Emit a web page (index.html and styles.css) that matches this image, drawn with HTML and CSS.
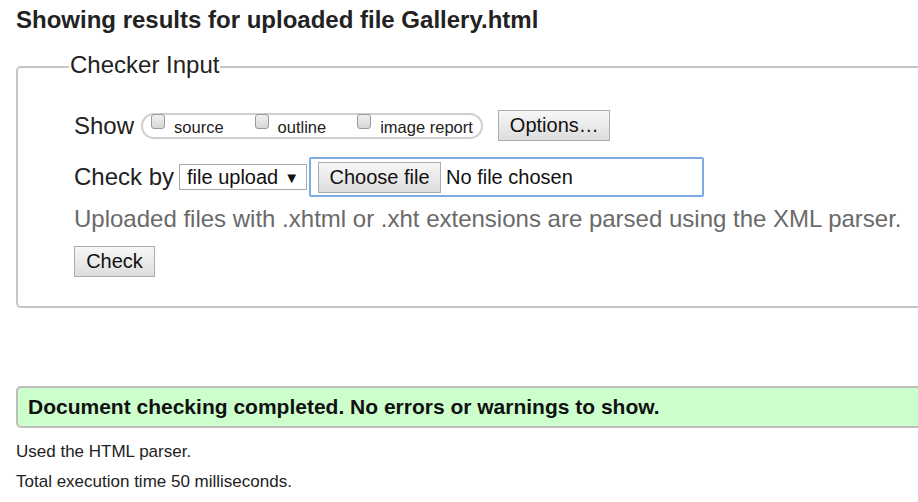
FILE: index.html
```html
<!DOCTYPE html>
<html lang="en">
<head>
<meta charset="utf-8">
<title>Showing results for uploaded file Gallery.html</title>
<link rel="stylesheet" href="styles.css">
</head>
<body>
<h1 class="title">Showing results for uploaded file Gallery.html</h1>
<form class="checker">
  <fieldset class="checker-fieldset">
    <legend class="checker-legend">Checker Input</legend>
    <div class="row row-show">
      <span class="row-label">Show</span>
      <span class="pill">
        <label class="opt"><input type="checkbox" class="cb"><span class="opt-text">source</span></label>
        <label class="opt"><input type="checkbox" class="cb"><span class="opt-text">outline</span></label>
        <label class="opt"><input type="checkbox" class="cb"><span class="opt-text">image report</span></label>
      </span>
      <button type="button" class="btn btn-options">Options…</button>
    </div>
    <div class="row row-check">
      <span class="row-label">Check by</span>
      <span class="select">file upload <span class="arrow">▼</span></span>
      <span class="file-box"><button type="button" class="btn btn-file">Choose file</button><span class="file-name">No file chosen</span></span>
    </div>
    <p class="hint">Uploaded files with .xhtml or .xht extensions are parsed using the XML parser.</p>
    <button type="button" class="btn btn-check">Check</button>
  </fieldset>
</form>
<div class="success">Document checking completed. No errors or warnings to show.</div>
<p class="meta meta-first">Used the HTML parser.</p>
<p class="meta">Total execution time 50 milliseconds.</p>
</body>
</html>
```

FILE: styles.css
```css
html, body {
  overflow: hidden;
}
body {
  margin: 0;
  padding: 0 0 0 16px;
  font-family: "Liberation Sans", Arial, sans-serif;
  color: #222;
  background: #fff;
}
.title {
  margin: 6px 0 0;
  font-size: 24px;
  line-height: 27px;
  font-weight: bold;
  color: #222;
}
.checker {
  margin: 18px -40px 0 0;
}
.checker-fieldset {
  margin: 0;
  border: 2px solid #c6c6c6;
  border-radius: 5px;
  padding: 27px 0 29px 56px;
  min-width: 0;
}
.checker-legend {
  margin-left: -5px;
  padding: 0 1px 4px;
  font-size: 24px;
  line-height: 28px;
  color: #222;
}
.row {
  display: flex;
  align-items: center;
}
.row-show {
  height: 31px;
}
.row-check {
  height: 40px;
  margin-top: 16px;
}
.row-label {
  font-size: 24px;
  line-height: 28px;
}
.pill {
  display: flex;
  align-items: flex-start;
  height: 26px;
  box-sizing: border-box;
  margin-left: 7px;
  border: 2px solid #cfcfcf;
  border-radius: 13px;
  padding: 0 8px 0 8px;
  gap: 31px;
}
.opt {
  display: flex;
  align-items: flex-start;
}
.cb {
  appearance: none;
  -webkit-appearance: none;
  margin: -1px 9px 0 0;
  width: 14px;
  height: 15px;
  box-sizing: border-box;
  border: 1px solid #9a9a9a;
  border-radius: 3px;
  background: linear-gradient(#f0f0f0, #d6d6d6);
}
.opt-text {
  margin-top: 3px;
  font-size: 16.5px;
  line-height: 19px;
  color: #222;
}
.btn {
  font-family: "Liberation Sans", Arial, sans-serif;
  font-size: 20px;
  color: #111;
  background: linear-gradient(#f7f7f7, #dddddd);
  border: 1px solid #acacac;
  border-radius: 0;
  height: 31px;
  padding: 0 10px;
  margin: 0;
  line-height: 29px;
  white-space: nowrap;
}
.btn-options {
  margin-left: 15px;
  width: 112px;
  text-align: left;
  padding-left: 11px;
}
.select {
  display: flex;
  align-items: center;
  box-sizing: border-box;
  height: 26px;
  width: 128px;
  margin-left: 5px;
  padding: 0 7px 0 7px;
  border: 1px solid #a9a9a9;
  background: #fff;
  font-size: 20px;
  color: #111;
  white-space: pre;
}
.arrow {
  margin-left: auto;
  font-size: 15px;
  color: #111;
}
.file-box {
  display: flex;
  align-items: center;
  box-sizing: border-box;
  height: 40px;
  width: 395px;
  margin-left: 2px;
  padding: 0 7px;
  border: 2px solid #7fa9e2;
  border-radius: 2px;
}
.btn-file {
  width: 123px;
  text-align: center;
  padding: 0;
}
.file-name {
  margin-left: 5px;
  font-size: 20px;
  color: #111;
  white-space: nowrap;
}
.hint {
  margin: 8px 0 0;
  font-size: 24px;
  line-height: 28px;
  color: #6a6a6a;
}
.btn-check {
  display: block;
  margin-top: 13px;
  width: 81px;
  text-align: center;
  padding: 0;
}
.success {
  margin: 78px -40px 0 0;
  height: 42px;
  box-sizing: border-box;
  border: 2px solid #bdbdbd;
  border-radius: 5px;
  background: #ccffcc;
  padding: 0 0 0 10px;
  font-size: 21px;
  line-height: 38px;
  font-weight: bold;
  color: #111;
}
.meta {
  margin: 0;
  font-size: 17px;
  line-height: 30px;
  color: #222;
}
.meta-first {
  margin-top: 9px;
}
```
